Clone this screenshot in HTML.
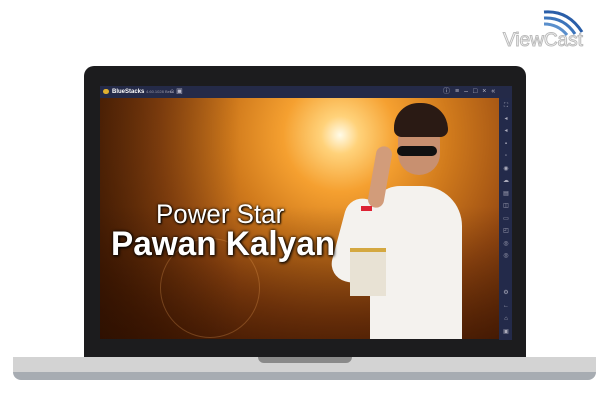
<!DOCTYPE html>
<html><head><style>
*{margin:0;padding:0;box-sizing:border-box}
body{width:602px;height:414px;background:#fff;position:relative;overflow:hidden;font-family:"Liberation Sans",sans-serif}
.a{position:absolute}
</style></head><body>
<svg class="a" style="left:500px;top:4px" width="100" height="48" viewBox="0 0 100 48">
<path d="M44 8 Q68 6 82 28" stroke="#2a5ea8" stroke-width="3" fill="none"/>
<path d="M44 14 Q64 13 75 30" stroke="#3b74bb" stroke-width="3" fill="none"/>
<path d="M44 20 Q58 20 67 31" stroke="#5a8fcc" stroke-width="3" fill="none"/>
<text x="3" y="42" font-family="Liberation Sans" font-size="19" fill="#fff" stroke="#bbb" stroke-width="1">ViewCast</text>
</svg>
<div class="a" style="left:84px;top:66px;width:442px;height:294px;background:#1c1c1e;border-radius:10px 10px 0 0"></div>
<div class="a" style="left:13px;top:357px;width:583px;height:23px;background:#a7acb2;border-radius:0 0 8px 8px"></div>
<div class="a" style="left:13px;top:357px;width:583px;height:15px;background:#d3d3d3"></div>
<div class="a" style="left:258px;top:357px;width:94px;height:6px;background:#8a8a8a;border-radius:0 0 8px 8px"></div>
<div class="a" style="left:100px;top:86px;width:412px;height:12px;background:#242a48"></div>
<div class="a" style="left:103px;top:89px;width:6px;height:5px;background:#e0b030;border-radius:3px"></div>
<div class="a" style="left:112px;top:87px;font-size:6px;font-weight:bold;color:#fff;line-height:10px">BlueStacks <span style="font-weight:normal;color:#99a;font-size:4px">4.60.1028 Beta</span></div>
<div class="a" style="left:170px;top:87px;font-size:7px;color:#bbc;line-height:10px">⌂ ▣</div>
<div class="a" style="left:443px;top:87px;font-size:7px;color:#bbc;line-height:10px;letter-spacing:5px">ⓘ≡–□×«</div>
<div class="a" style="left:499px;top:98px;width:13px;height:242px;background:#232a4a"></div>
<div class="a" style="left:502px;top:100px;width:8px;font-size:6px;color:#aab;line-height:12.5px;text-align:center">⛶<br>◂<br>◂<br>▪<br>▫<br>◉<br>☁<br>▤<br>◫<br>▭<br>◰<br>◎<br>◎</div>
<div class="a" style="left:502px;top:287px;width:8px;font-size:6px;color:#aab;line-height:13px;text-align:center">⚙<br>←<br>⌂<br>▣</div>
<div class="a" style="left:100px;top:98px;width:399px;height:241px;overflow:hidden;background:radial-gradient(circle at 240px 37px,#fffbe8 0%,#ffd27a 6%,#f5a030 18%,#d07a1c 35%,#9a4c12 58%,#5a2606 85%,#3a1604 100%)">
 <div class="a" style="left:0;top:0;width:399px;height:241px;background:linear-gradient(180deg,rgba(0,0,0,0) 45%,rgba(50,15,0,.6) 100%)"></div>
 <div class="a" style="left:0;top:0;width:399px;height:241px;background:linear-gradient(90deg,rgba(40,15,0,.5) 0%,rgba(0,0,0,0) 35%)"></div>
 <div class="a" style="left:60px;top:140px;width:100px;height:100px;border:1px solid rgba(255,180,100,.25);border-radius:50%"></div>
 <div class="a" style="left:270px;top:88px;width:92px;height:160px;background:#f4f2ee;border-radius:30px 40px 0 0"></div>
 <div class="a" style="left:238px;top:100px;width:38px;height:85px;background:#f4f2ee;border-radius:18px;transform:rotate(15deg)"></div>
 <div class="a" style="left:298px;top:22px;width:42px;height:55px;background:#c89070;border-radius:20px 20px 22px 22px"></div>
 <div class="a" style="left:294px;top:5px;width:54px;height:34px;background:#2a1a14;border-radius:26px 28px 8px 8px"></div>
 <div class="a" style="left:297px;top:48px;width:40px;height:10px;background:#111;border-radius:5px"></div>
 <div class="a" style="left:272px;top:48px;width:16px;height:62px;background:#d29c7a;border-radius:8px;transform:rotate(10deg)"></div>
 <div class="a" style="left:261px;top:108px;width:11px;height:5px;background:#d23"></div>
 <div class="a" style="left:250px;top:150px;width:36px;height:48px;background:#e8e2d4;border-top:4px solid #d4a840"></div>
 <div class="a" style="left:56px;top:101px;font-size:27px;color:#fff;text-shadow:0 0 3px #000,1px 1px 2px #000;transform:scaleX(.96);transform-origin:left">Power Star</div>
 <div class="a" style="left:11px;top:127px;font-size:34px;font-weight:bold;color:#fff;text-shadow:0 0 3px #000,1px 1px 3px #000;transform:scaleX(.98);transform-origin:left">Pawan Kalyan</div>
</div>
</body></html>
